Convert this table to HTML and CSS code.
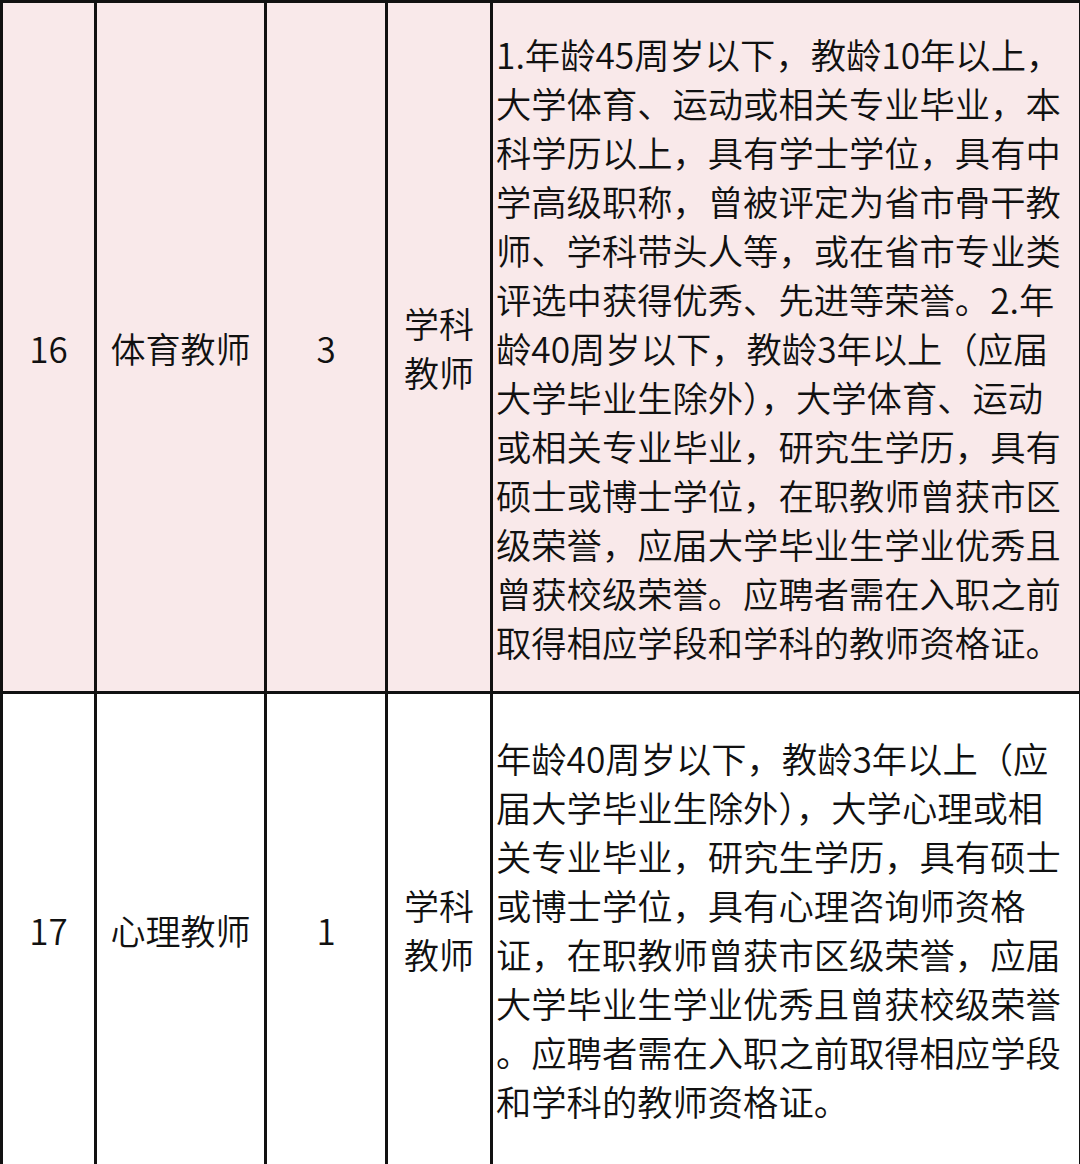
FILE: index.html
```html
<!DOCTYPE html>
<html lang="zh-CN">
<head>
<meta charset="utf-8">
<link rel="stylesheet" href="styles.css">
</head>
<body>
<table class="grid">
  <colgroup>
    <col class="c1"><col class="c2"><col class="c3"><col class="c4"><col class="c5">
  </colgroup>
  <tr class="pink">
    <td class="num">16</td>
    <td class="name">体育教师</td>
    <td class="num">3</td>
    <td class="type">学科<br>教师</td>
    <td class="req"><span>1.年龄45周岁以下，教龄10年以上，</span><span>大学体育、运动或相关专业毕业，本</span><span>科学历以上，具有学士学位，具有中</span><span>学高级职称，曾被评定为省市骨干教</span><span>师、学科带头人等，或在省市专业类</span><span>评选中获得优秀、先进等荣誉。2.年</span><span>龄40周岁以下，教龄3年以上（应届</span><span>大学毕业生除外），大学体育、运动</span><span>或相关专业毕业，研究生学历，具有</span><span>硕士或博士学位，在职教师曾获市区</span><span>级荣誉，应届大学毕业生学业优秀且</span><span>曾获校级荣誉。应聘者需在入职之前</span><span>取得相应学段和学科的教师资格证。</span></td>
  </tr>
  <tr class="white">
    <td class="num">17</td>
    <td class="name">心理教师</td>
    <td class="num">1</td>
    <td class="type">学科<br>教师</td>
    <td class="req"><span>年龄40周岁以下，教龄3年以上（应</span><span>届大学毕业生除外），大学心理或相</span><span>关专业毕业，研究生学历，具有硕士</span><span>或博士学位，具有心理咨询师资格</span><span>证，在职教师曾获市区级荣誉，应届</span><span>大学毕业生学业优秀且曾获校级荣誉</span><span>。应聘者需在入职之前取得相应学段</span><span>和学科的教师资格证。</span></td>
  </tr>
</table>
</body>
</html>
```

FILE: styles.css
```css
html, body {
  margin: 0;
  padding: 0;
  background: #ffffff;
}
body {
  font-family: "Noto Sans CJK SC", "Noto Sans", sans-serif;
  font-weight: 350;
  color: #111111;
  overflow: hidden;
}
.grid {
  border-collapse: collapse;
  width: 1079px;
  table-layout: fixed;
}
.c1 { width: 94px; }
.c2 { width: 170px; }
.c3 { width: 121px; }
.c4 { width: 105px; }
.c5 { width: 589px; }
.grid td {
  border: 3px solid #111111;
  padding: 0;
  vertical-align: middle;
  font-size: 35px;
  line-height: 49px;
}
.pink td { background: #f9e9ea; height: 688px; }
.white td { background: #ffffff; height: 470px; }
.num { text-align: center; }
.name { text-align: center; }
.type { text-align: center; line-height: 48px; }
.grid td.req {
  padding: 0 2px 0 3px;
  font-size: 35.3px;
}
.req span {
  display: block;
  white-space: nowrap;
}
```
